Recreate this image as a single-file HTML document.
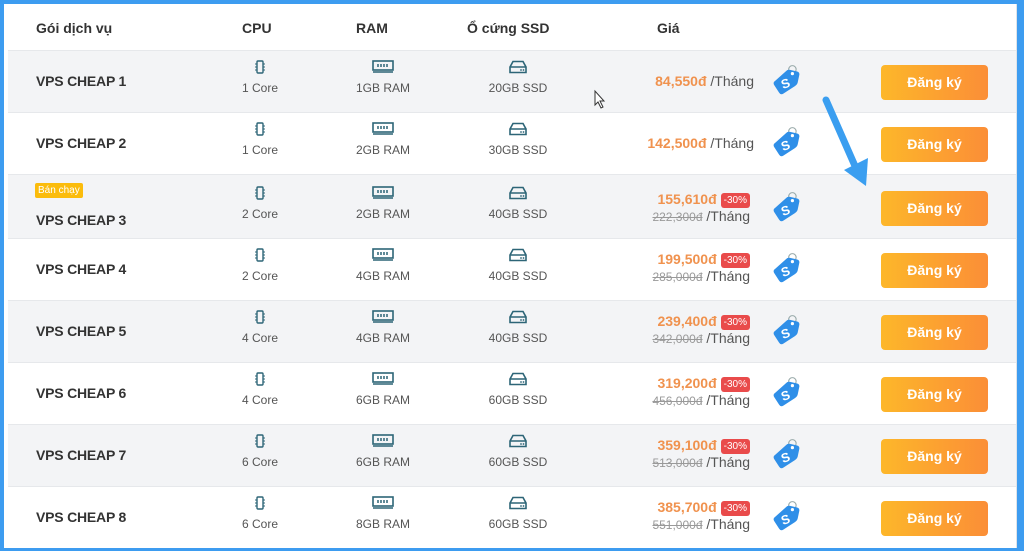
<!DOCTYPE html>
<html><head><meta charset="utf-8"><style>
*{margin:0;padding:0;box-sizing:border-box}
body{width:1024px;height:551px;overflow:hidden;background:#3d9cf0;font-family:"Liberation Sans",Arial,sans-serif;position:relative}
.frame{position:absolute;left:4px;top:4px;width:1013px;height:544px;background:#fff;border-right:1px solid #dfe3e8;overflow:hidden}
.hd{position:absolute;top:0;left:0;width:100%;height:46px;font-size:14px;font-weight:bold;color:#333}
.hd span{position:absolute;top:16px}
.row{position:absolute;left:4px;width:1008px;height:62px;border-top:1px solid #e6e8eb;background:#fff}
.row.g{background:#f3f4f6}
.nm{position:absolute;left:28px;top:22px;font-size:14px;font-weight:bold;color:#333;letter-spacing:-.2px}
.badge{position:absolute;left:27px;top:8px;background:#fbbc0c;color:#fff;font-size:10px;padding:2px 3px;border-radius:2px}
.col{position:absolute;width:120px;text-align:center;top:9px}
.col svg{display:block;margin:0 auto}
.col div{font-size:12px;color:#555;margin-top:7px}
.pr{position:absolute;right:266px;text-align:right;font-size:14px;color:#555}
.pr b{color:#f0924e}
.pr s{color:#999;font-size:12px}
.off{display:inline-block;background:#e94b4b;color:#fff;font-size:10px;padding:2px 3px;border-radius:3px;margin-left:4px;vertical-align:1px;font-weight:normal}
.tag{position:absolute;left:763px;top:13px}
.btn{position:absolute;left:873px;top:14px;width:107px;height:35px;border-radius:4px;background:linear-gradient(90deg,#fdb72a,#fb8e37);color:#fff;font-weight:bold;font-size:14px;text-align:center;line-height:35px}
</style></head><body>
<svg width="0" height="0" style="position:absolute"><defs>
<symbol id="cpu" viewBox="0 0 10 14"><rect x="2" y="1" width="6" height="12" rx="1" fill="none" stroke="#2d6577" stroke-width="1.4"/><path d="M0 4h2M0 7h2M0 10h2M8 4h2M8 7h2M8 10h2" stroke="#2d6577" stroke-width="1"/></symbol>
<symbol id="ram" viewBox="0 0 22 14"><rect x="1" y="1" width="20" height="9" fill="none" stroke="#2d6577" stroke-width="1.6"/><path d="M6 4v3M9 4v3M12 4v3M15 4v3M1 12h20" stroke="#2d6577" stroke-width="1.5"/></symbol>
<symbol id="ssd" viewBox="0 0 20 14"><path d="M2 7 L5 1.5 H15 L18 7 V12.5 H2 Z M2 7H18" fill="none" stroke="#2d6577" stroke-width="1.6"/><circle cx="13" cy="10" r=".9" fill="#2d6577"/><circle cx="15.5" cy="10" r=".9" fill="#2d6577"/></symbol>
<symbol id="tag" viewBox="0 0 28 30"><circle cx="20" cy="5" r="3.5" fill="none" stroke="#9aa" stroke-width="1"/><path d="M12 7 Q13 5 15 5 L22 5 Q25 5 25 8 L25 15 Q25 17 23 19 L14 28 Q12 30 10 28 L4 22 Q2 20 4 18 Z" fill="#2f8fe8" transform="rotate(12 14 16)"/><circle cx="20" cy="9" r="1.5" fill="#fff"/><text x="10" y="23" font-size="12" font-weight="bold" fill="#fff" font-family="Liberation Sans" transform="rotate(-20 12 20)">S</text></symbol>
</defs></svg>
<div class="frame">
<div class="hd"><span style="left:32px;font-weight:bold">Gói dịch vụ</span><span style="left:238px">CPU</span><span style="left:352px">RAM</span><span style="left:463px">Ổ cứng SSD</span><span style="left:653px">Giá</span></div>

<div class="row g" style="top:46px"><div class="nm">VPS CHEAP 1</div>
<div class="col" style="left:192px"><svg width="10" height="14"><use href="#cpu"/></svg><div>1 Core</div></div>
<div class="col" style="left:315px"><svg width="22" height="14"><use href="#ram"/></svg><div>1GB RAM</div></div>
<div class="col" style="left:450px"><svg width="20" height="14"><use href="#ssd"/></svg><div>20GB SSD</div></div>
<div class="pr" style="top:22px;right:262px"><b>84,550đ</b> /Tháng</div>
<svg class="tag" width="30" height="32"><use href="#tag"/></svg><div class="btn">Đăng ký</div></div>

<div class="row" style="top:108px"><div class="nm">VPS CHEAP 2</div>
<div class="col" style="left:192px"><svg width="10" height="14"><use href="#cpu"/></svg><div>1 Core</div></div>
<div class="col" style="left:315px"><svg width="22" height="14"><use href="#ram"/></svg><div>2GB RAM</div></div>
<div class="col" style="left:450px"><svg width="20" height="14"><use href="#ssd"/></svg><div>30GB SSD</div></div>
<div class="pr" style="top:22px;right:262px"><b>142,500đ</b> /Tháng</div>
<svg class="tag" width="30" height="32"><use href="#tag"/></svg><div class="btn">Đăng ký</div></div>

<div class="row g" style="top:170px;height:64px"><div class="badge">Bán chạy</div><div class="nm" style="top:37px">VPS CHEAP 3</div>
<div class="col" style="left:192px;top:11px"><svg width="10" height="14"><use href="#cpu"/></svg><div>2 Core</div></div>
<div class="col" style="left:315px;top:11px"><svg width="22" height="14"><use href="#ram"/></svg><div>2GB RAM</div></div>
<div class="col" style="left:450px;top:11px"><svg width="20" height="14"><use href="#ssd"/></svg><div>40GB SSD</div></div>
<div class="pr" style="top:16px"><b>155,610đ</b><span class="off">-30%</span><br><s>222,300đ</s> /Tháng</div>
<svg class="tag" width="30" height="32" style="top:16px"><use href="#tag"/></svg><div class="btn" style="top:16px">Đăng ký</div></div>

<div class="row" style="top:234px"><div class="nm">VPS CHEAP 4</div>
<div class="col" style="left:192px"><svg width="10" height="14"><use href="#cpu"/></svg><div>2 Core</div></div>
<div class="col" style="left:315px"><svg width="22" height="14"><use href="#ram"/></svg><div>4GB RAM</div></div>
<div class="col" style="left:450px"><svg width="20" height="14"><use href="#ssd"/></svg><div>40GB SSD</div></div>
<div class="pr" style="top:12px"><b>199,500đ</b><span class="off">-30%</span><br><s>285,000đ</s> /Tháng</div>
<svg class="tag" width="30" height="32"><use href="#tag"/></svg><div class="btn">Đăng ký</div></div>

<div class="row g" style="top:296px"><div class="nm">VPS CHEAP 5</div>
<div class="col" style="left:192px"><svg width="10" height="14"><use href="#cpu"/></svg><div>4 Core</div></div>
<div class="col" style="left:315px"><svg width="22" height="14"><use href="#ram"/></svg><div>4GB RAM</div></div>
<div class="col" style="left:450px"><svg width="20" height="14"><use href="#ssd"/></svg><div>40GB SSD</div></div>
<div class="pr" style="top:12px"><b>239,400đ</b><span class="off">-30%</span><br><s>342,000đ</s> /Tháng</div>
<svg class="tag" width="30" height="32"><use href="#tag"/></svg><div class="btn">Đăng ký</div></div>

<div class="row" style="top:358px"><div class="nm">VPS CHEAP 6</div>
<div class="col" style="left:192px"><svg width="10" height="14"><use href="#cpu"/></svg><div>4 Core</div></div>
<div class="col" style="left:315px"><svg width="22" height="14"><use href="#ram"/></svg><div>6GB RAM</div></div>
<div class="col" style="left:450px"><svg width="20" height="14"><use href="#ssd"/></svg><div>60GB SSD</div></div>
<div class="pr" style="top:12px"><b>319,200đ</b><span class="off">-30%</span><br><s>456,000đ</s> /Tháng</div>
<svg class="tag" width="30" height="32"><use href="#tag"/></svg><div class="btn">Đăng ký</div></div>

<div class="row g" style="top:420px"><div class="nm">VPS CHEAP 7</div>
<div class="col" style="left:192px"><svg width="10" height="14"><use href="#cpu"/></svg><div>6 Core</div></div>
<div class="col" style="left:315px"><svg width="22" height="14"><use href="#ram"/></svg><div>6GB RAM</div></div>
<div class="col" style="left:450px"><svg width="20" height="14"><use href="#ssd"/></svg><div>60GB SSD</div></div>
<div class="pr" style="top:12px"><b>359,100đ</b><span class="off">-30%</span><br><s>513,000đ</s> /Tháng</div>
<svg class="tag" width="30" height="32"><use href="#tag"/></svg><div class="btn">Đăng ký</div></div>

<div class="row" style="top:482px"><div class="nm">VPS CHEAP 8</div>
<div class="col" style="left:192px"><svg width="10" height="14"><use href="#cpu"/></svg><div>6 Core</div></div>
<div class="col" style="left:315px"><svg width="22" height="14"><use href="#ram"/></svg><div>8GB RAM</div></div>
<div class="col" style="left:450px"><svg width="20" height="14"><use href="#ssd"/></svg><div>60GB SSD</div></div>
<div class="pr" style="top:12px"><b>385,700đ</b><span class="off">-30%</span><br><s>551,000đ</s> /Tháng</div>
<svg class="tag" width="30" height="32"><use href="#tag"/></svg><div class="btn">Đăng ký</div></div>
</div>
<svg style="position:absolute;left:0;top:0" width="1024" height="551">
<line x1="826" y1="100" x2="855" y2="166" stroke="#3a9ef0" stroke-width="7" stroke-linecap="round"/>
<path d="M844 170 L866 186 L868 158 Z" fill="#3a9ef0"/>
<path d="M595 91 L595 105 L598 102 L601 108 L603 107 L600 101 L604 101 Z" fill="#fff" stroke="#333" stroke-width="1"/>
</svg>
</body></html>
